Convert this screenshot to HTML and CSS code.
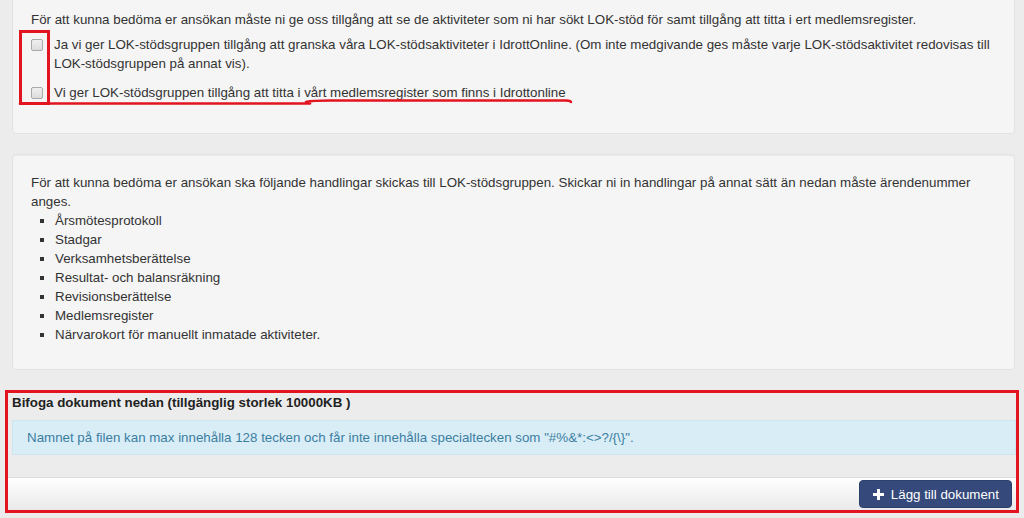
FILE: index.html
```html
<!DOCTYPE html>
<html lang="sv">
<head>
    <meta charset="UTF-8">
    <title>LOK-stöd ansökan</title>
    <link rel="stylesheet" href="styles.css">
</head>
<body>
    <div class="page">
        <div class="well well-first">
            <p class="intro">För att kunna bedöma er ansökan måste ni ge oss tillgång att se de aktiviteter som ni har sökt LOK-stöd för samt tillgång att titta i ert medlemsregister.</p>
            <div class="checks">
                <label class="check">
                    <input type="checkbox">
                    <span>Ja vi ger LOK-stödsgruppen tillgång att granska våra LOK-stödsaktiviteter i IdrottOnline. (Om inte medgivande ges måste varje LOK-stödsaktivitet redovisas till LOK-stödsgruppen på annat vis).</span>
                </label>
                <label class="check">
                    <input type="checkbox">
                    <span>Vi ger LOK-stödsgruppen tillgång att titta i vårt medlemsregister som finns i Idrottonline</span>
                </label>
            </div>
            <!-- red markings drawn on top of the screenshot -->
            <svg class="marks" width="1024" height="120" viewBox="0 0 1024 120">
                <rect x="20.5" y="31.5" width="28" height="72" fill="none" stroke="#e2141f" stroke-width="3"/>
                <path d="M20 103.5 L310 103.5" fill="none" stroke="#e2141f" stroke-width="2.5" stroke-linecap="round"/>
                <path d="M306 102 Q312 100.5 330 100.5 L566 100.5 Q571 100.8 571 102" fill="none" stroke="#e2141f" stroke-width="2.5" stroke-linecap="round"/>
            </svg>
        </div>

        <div class="well">
            <p class="intro">För att kunna bedöma er ansökan ska följande handlingar skickas till LOK-stödsgruppen. Skickar ni in handlingar på annat sätt än nedan måste ärendenummer anges.</p>
            <ul class="docs">
                <li>Årsmötesprotokoll</li>
                <li>Stadgar</li>
                <li>Verksamhetsberättelse</li>
                <li>Resultat- och balansräkning</li>
                <li>Revisionsberättelse</li>
                <li>Medlemsregister</li>
                <li>Närvarokort för manuellt inmatade aktiviteter.</li>
            </ul>
        </div>
    </div>

    <div class="upload">
        <h4>Bifoga dokument nedan (tillgänglig storlek 10000KB )</h4>
        <div class="alert">Namnet på filen kan max innehålla 128 tecken och får inte innehålla specialtecken som "#%&amp;*:&lt;&gt;?/{\}".</div>
        <div class="upload-footer">
            <button type="button" class="btn">
                <svg class="plus" width="11" height="11" viewBox="0 0 11 11"><path d="M4 0h3v4h4v3H7v4H4V7H0V4h4z" fill="#fff"/></svg>
                Lägg till dokument
            </button>
        </div>
    </div>
</body>
</html>
```

FILE: styles.css
```css
html, body
{
    margin: 0;
    padding: 0;
}
body
{
    background: #ececec;
    color: #333;
    font-family: 'Liberation Sans', Arial, sans-serif;
    font-size: 13.33px;
    line-height: 19px;
    overflow: hidden;
}
.page
{
    padding: 0 9px 0 12px;
}
.well
{
    position: relative;
    background: #f5f5f5;
    border: 1px solid #e3e3e3;
    border-radius: 4px;
    box-shadow: inset 0 1px 1px rgba(0, 0, 0, 0.05);
    padding: 18px 18px 19px 18px;
    margin-bottom: 20px;
}
.well-first
{
    margin-top: -9px;
}
.intro
{
    margin: 0;
}
.checks
{
    display: flex;
    flex-direction: column;
    gap: 10px;
    margin: 6px 0 12px 0;
}
.check
{
    display: flex;
    align-items: flex-start;
    gap: 11px;
    cursor: pointer;
}
.check input
{
    appearance: none;
    -webkit-appearance: none;
    flex-shrink: 0;
    width: 12px;
    height: 12px;
    margin: 4px 0 0 0;
    border: 1px solid #a9a9a9;
    border-radius: 2px;
    background: linear-gradient(#f0f0f0, #dcdcdc);
}
.marks
{
    position: absolute;
    top: 8px;
    left: -13px;
    pointer-events: none;
}
.docs
{
    margin: 0 0 6px 0;
    padding-left: 24px;
    list-style: square;
}
.upload
{
    margin: 0 5px;
    border: 3px solid #e2141f;
    background: #ececec;
}
.upload h4
{
    margin: 0;
    padding-left: 4px;
    font-size: 13.33px;
    line-height: 19px;
    color: #222;
}
.alert
{
    margin: 8px 0 22px 4px;
    padding: 8px 14px;
    background: #d9edf7;
    border: 1px solid #cfe6f1;
    color: #3b7ea1;
    line-height: 17px;
}
.upload-footer
{
    display: flex;
    justify-content: flex-end;
    border-top: 1px solid #dcdcdc;
    background: linear-gradient(#ffffff, #e9e9e9);
    padding: 2px 4px 2px 4px;
}
.btn
{
    display: flex;
    align-items: center;
    gap: 7px;
    height: 28px;
    padding: 0 12px 0 13px;
    background: #35497b;
    border: 1px solid #2d3f6b;
    border-radius: 4px;
    color: #fff;
    font-family: 'Liberation Sans', Arial, sans-serif;
    font-size: 13.33px;
    cursor: pointer;
}
.plus
{
    display: block;
}
```
